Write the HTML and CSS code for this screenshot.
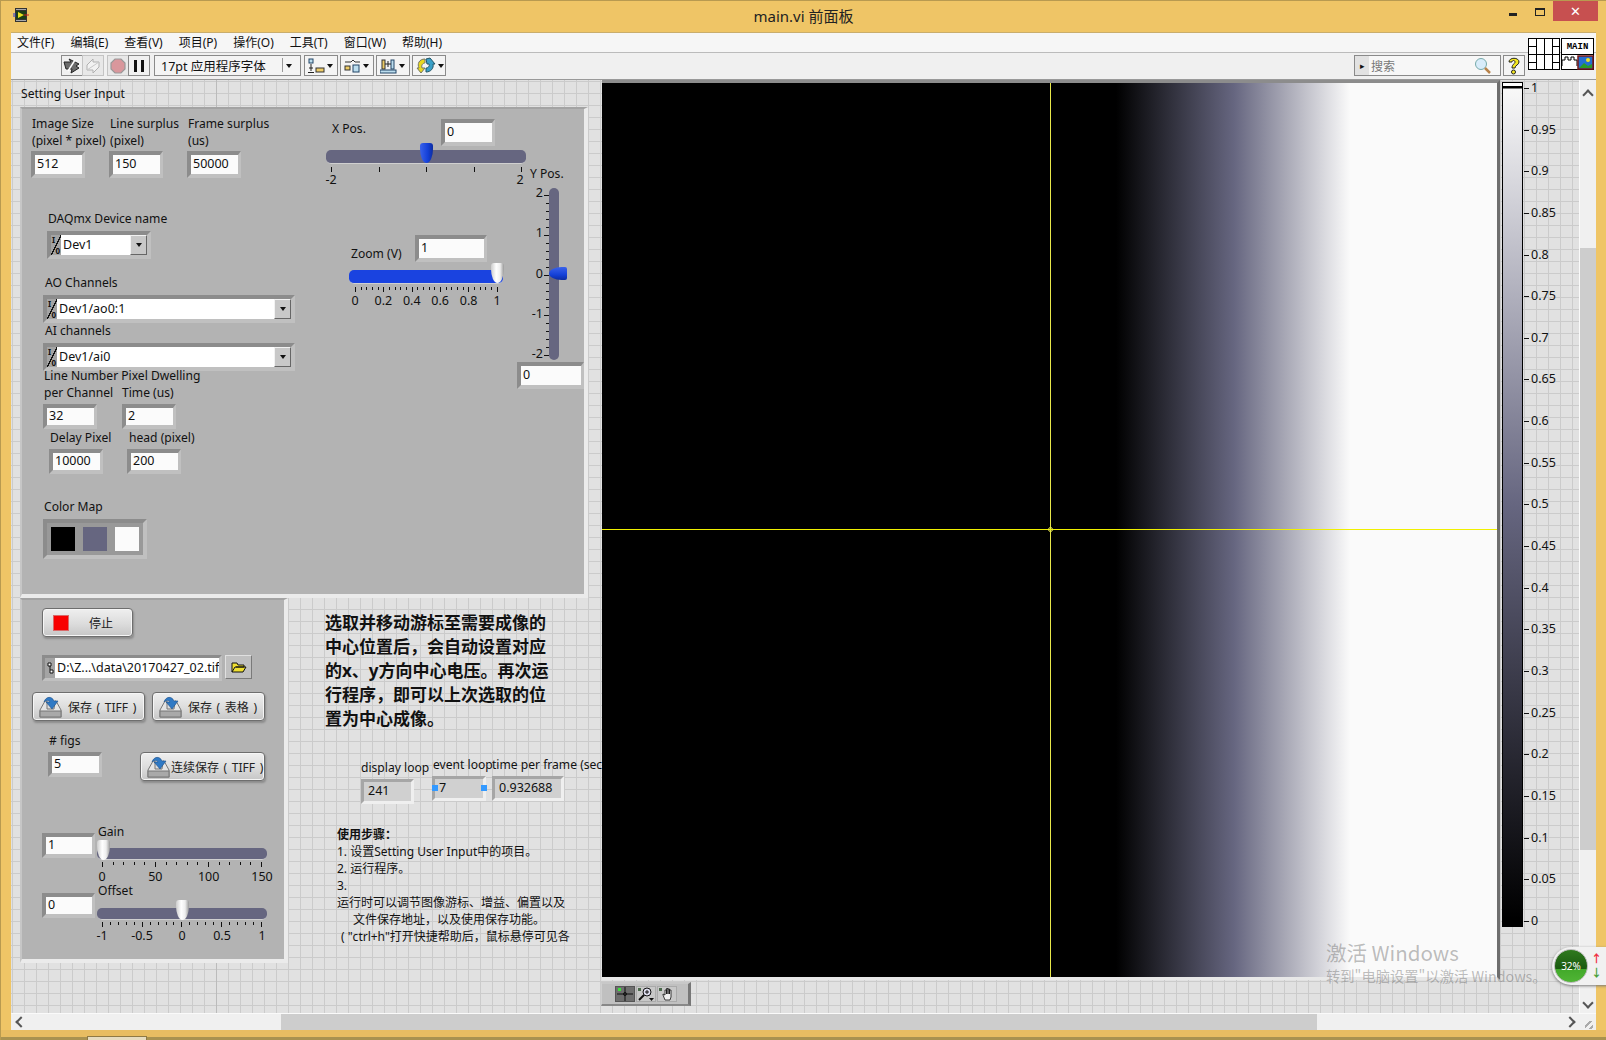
FILE: index.html
```html
<!DOCTYPE html>
<html lang="zh">
<head>
  <meta charset="UTF-8">
  <title>main.vi 前面板</title>
  <link rel="stylesheet" href="styles.css">
</head>
<body>

<svg class="defs" width="0" height="0">
  <symbol id="save-icon" viewBox="0 0 24 24">
    <path d="M2 15 L7 6 H9 V14 H16 L17 6 H18 L23 15 V22 H2 Z" fill="#e4e4e4" stroke="#777" stroke-width="1"/>
    <rect x="2" y="16" width="21" height="6" fill="#a9a9a9" stroke="#777" stroke-width="1"/>
    <path d="M6 7 C8 1 14 1 16 6 H20 L14 14 L8 7 H12 C11 5 8 5 6 7 Z" fill="#2f79c4" stroke="#1c4f88" stroke-width=".6"/>
  </symbol>
</svg>

<div class="window">

  <div class="titlebar">
    <svg class="app-icon" width="16" height="16" viewBox="0 0 16 16">
      <rect x="2" y="1" width="12" height="14" fill="#333"/>
      <rect x="3" y="2" width="10" height="1" fill="#aaa"/>
      <rect x="3" y="13" width="10" height="1" fill="#aaa"/>
      <rect x="3" y="4" width="10" height="8" fill="#1d3d16"/>
      <path d="M5 5 L11 8 L5 11 Z" fill="#e8e020"/>
      <path d="M0 7 H3 M0 9 H3" stroke="#2233cc"/>
      <path d="M11 8 H16" stroke="#d02020"/>
    </svg>
    <div class="title">main.vi 前面板</div>
    <div class="win-buttons">
      <span class="win-min"></span>
      <span class="win-max"></span>
      <span class="win-close">✕</span>
    </div>
  </div>

  <div class="client">
    <div class="menubar">
      <span>文件(F)</span><span>编辑(E)</span><span>查看(V)</span><span>项目(P)</span><span>操作(O)</span><span>工具(T)</span><span>窗口(W)</span><span>帮助(H)</span>
    </div>

    <div class="toolbar">
      <div class="tool-group">
        <button class="tool">
          <svg width="18" height="16" viewBox="0 0 18 16"><path d="M1 4 H8 L6 1 L16 6 L13 8 L16 10 L8 15 L9 11 H3 Z" fill="#6a6a6a" stroke="#222"/><path d="M5 13 L12 2" stroke="#fff" stroke-width="1.4"/></svg>
        </button>
        <button class="tool tool-off">
          <svg width="18" height="16" viewBox="0 0 18 16"><path d="M3 7 L9 1 V4 H15 V9 M15 9 L9 15 V12 H3 V7" fill="#f2f2f2" stroke="#b0b0b0" stroke-width="1"/><path d="M3 12 L15 4" stroke="#c8c8c8"/></svg>
        </button>
      </div>
      <div class="tool-group">
        <button class="tool tool-off">
          <svg width="16" height="16" viewBox="0 0 16 16"><path d="M5 1 H11 L15 5 V11 L11 15 H5 L1 11 V5 Z" fill="#d9979c" stroke="#999" stroke-width="1.2"/></svg>
        </button>
        <button class="tool">
          <svg width="12" height="14" viewBox="0 0 12 14"><path d="M1 1 H4 V13 H1 Z M8 1 H11 V13 H8 Z" fill="#111"/></svg>
        </button>
      </div>
      <div class="font-ring"><span>17pt 应用程序字体</span><i class="arrow-down"></i></div>
      <div class="align-btn">
        <svg width="17" height="16" viewBox="0 0 17 16"><rect x="1" y="1" width="4" height="4" fill="#bde" stroke="#246"/><path d="M3 6 V13 M1 10 H5" stroke="#222"/><rect x="8" y="10" width="8" height="4" fill="#ec6" stroke="#333"/><path d="M0 14.500 H6" stroke="#222"/></svg>
        <i class="arrow-down"></i>
      </div>
      <div class="align-btn">
        <svg width="17" height="16" viewBox="0 0 17 16"><path d="M1 4 H7 L9 2 L11 4 H16" fill="none" stroke="#333"/><rect x="1" y="8" width="5" height="4" fill="#ec6" stroke="#333"/><rect x="9" y="7" width="6" height="7" fill="#bde" stroke="#246"/></svg>
        <i class="arrow-down"></i>
      </div>
      <div class="align-btn">
        <svg width="17" height="16" viewBox="0 0 17 16"><rect x="2" y="2" width="3" height="9" fill="#ec6" stroke="#333"/><rect x="11" y="2" width="3" height="9" fill="#bde" stroke="#246"/><path d="M5 6 H11 M8 3 V9" stroke="#222"/><rect x="0" y="12" width="16" height="3" fill="#bde" stroke="#246"/></svg>
        <i class="arrow-down"></i>
      </div>
      <div class="align-btn">
        <svg width="20" height="18" viewBox="0 0 20 18"><path d="M9 2 C3 2 1 7 3 11 L1 11 L5 16 L9 11 L6 11 C5 8 7 6 9 6 Z" fill="#e8d820" stroke="#776"/><path d="M10 2 L14 1 L19 7 H17 C18 11 15 15 10 15 V11 C12 11 14 9 13 7 H11 Z" fill="#3aa0c8" stroke="#256"/></svg>
        <i class="arrow-down"></i>
      </div>
      <div class="toolbar-right">
        <div class="search">
          <span class="search-tab">▸</span>
          <span class="search-text">搜索</span>
          <svg width="18" height="18" viewBox="0 0 18 18"><circle cx="7" cy="7" r="5.500" fill="#d8ecfa" stroke="#7aa"/><path d="M11 11 L16 16" stroke="#b8824a" stroke-width="2.500"/></svg>
        </div>
        <div class="help-btn">
          <svg width="14" height="19" viewBox="0 0 14 19"><path d="M2 6 C2 1 12 1 12 6 C12 9 8 9 8 12 H5 C5 8 8 8 8 6 C8 4 5 4 5 6 Z" fill="#f4e820" stroke="#222"/><circle cx="6.500" cy="16" r="2" fill="#f4e820" stroke="#222"/></svg>
        </div>
        <svg class="vi-icon" width="66" height="33" viewBox="0 0 66 33">
          <rect x=".5" y=".5" width="31" height="31" fill="#fff" stroke="#000"/>
          <path d="M8.500 0 V32 M16.500 0 V32 M24.500 0 V32 M0 8.500 H8 M24 8.500 H32 M0 16.500 H32 M0 24.500 H8 M24 24.500 H32" stroke="#000"/>
          <rect x="33.500" y=".5" width="32" height="31" fill="#fff" stroke="#000"/>
          <path d="M33 16.500 H66" stroke="#000"/>
          <text x="49.500" y="11" text-anchor="middle" class="vi-main">MAIN</text>
          <path d="M34 28 V22 H37 V19 H40 V22 H43 V19 H46 V22 H49 V28" fill="none" stroke="#000"/>
          <rect x="50" y="18" width="15" height="13" fill="#2470d0" stroke="#7a1a1a" stroke-width="1.500"/>
          <circle cx="60" cy="22" r="2" fill="#f4e020"/>
          <path d="M51 30 L56 25 L60 28 L64 26 V30 Z" fill="#2a9a2a"/>
        </svg>
      </div>
    </div>

    <div class="main-row">
      <div class="canvas">

        <div class="cluster cluster-setting"></div>
        <div class="cluster cluster-run"></div>

        <div class="lbl l-setting">Setting User Input</div>

        <div class="lbl l-size">Image Size<br>(pixel * pixel)</div>
        <div class="lbl l-surplus">Line surplus<br>(pixel)</div>
        <div class="lbl l-frame">Frame surplus<br>(us)</div>
        <div class="num n-size"><span>512</span></div>
        <div class="num n-surplus"><span>150</span></div>
        <div class="num n-frame"><span>50000</span></div>

        <div class="lbl l-daq">DAQmx Device name</div>
        <div class="ring r-dev"><span class="io"><em>I</em><em>0</em></span><span class="ring-text">Dev1</span><b class="ring-btn"><i class="arrow-down"></i></b></div>
        <div class="lbl l-ao">AO Channels</div>
        <div class="ring r-ao"><span class="io"><em>I</em><em>0</em></span><span class="ring-text">Dev1/ao0:1</span><b class="ring-btn"><i class="arrow-down"></i></b></div>
        <div class="lbl l-ai">AI channels</div>
        <div class="ring r-ai"><span class="io"><em>I</em><em>0</em></span><span class="ring-text">Dev1/ai0</span><b class="ring-btn"><i class="arrow-down"></i></b></div>

        <div class="lbl l-linenum">Line Number Pixel Dwelling<br>per Channel</div>
        <div class="lbl l-time">Time (us)</div>
        <div class="num num-low n-line"><span>32</span></div>
        <div class="num num-low n-dwell"><span>2</span></div>
        <div class="lbl l-delay">Delay Pixel</div>
        <div class="lbl l-head">head (pixel)</div>
        <div class="num num-low n-delay"><span>10000</span></div>
        <div class="num num-low n-head"><span>200</span></div>

        <div class="lbl l-cmap">Color Map</div>
        <div class="cmap">
          <span class="swatch swatch-black"></span>
          <span class="swatch swatch-slate"></span>
          <span class="swatch swatch-white"></span>
        </div>

        <div class="lbl l-xpos">X Pos.</div>
        <div class="num n-xpos"><span>0</span></div>
        <div class="slider s-xpos"><i class="thumb thumb-blue"></i></div>
        <div class="ticks t-xpos"><i></i><i></i><i></i><i></i><i></i></div>
        <div class="scale sc-xpos"><span>-2</span><span>2</span></div>

        <div class="lbl l-ypos">Y Pos.</div>
        <div class="slider-v s-ypos"><i class="thumb-v"></i></div>
        <div class="ticks-v t-ypos"><i></i><i class="mn"></i><i class="mn"></i><i class="mn"></i><i class="mn"></i><i></i><i class="mn"></i><i class="mn"></i><i class="mn"></i><i class="mn"></i><i></i><i class="mn"></i><i class="mn"></i><i class="mn"></i><i class="mn"></i><i></i><i class="mn"></i><i class="mn"></i><i class="mn"></i><i class="mn"></i><i></i></div>
        <div class="scale-v sc-ypos"><span>2</span><span>1</span><span>0</span><span>-1</span><span>-2</span></div>
        <div class="num n-ypos"><span>0</span></div>

        <div class="lbl l-zoom">Zoom (V)</div>
        <div class="num n-zoom"><span>1</span></div>
        <div class="slider s-zoom"><i class="thumb thumb-white"></i></div>
        <div class="ticks t-zoom"><i></i><i class="mn"></i><i class="mn"></i><i class="mn"></i><i class="mn"></i><i></i><i class="mn"></i><i class="mn"></i><i class="mn"></i><i class="mn"></i><i></i><i class="mn"></i><i class="mn"></i><i class="mn"></i><i class="mn"></i><i></i><i class="mn"></i><i class="mn"></i><i class="mn"></i><i class="mn"></i><i></i><i class="mn"></i><i class="mn"></i><i class="mn"></i><i class="mn"></i><i></i></div>
        <div class="scale sc-zoom"><span>0</span><span>0.2</span><span>0.4</span><span>0.6</span><span>0.8</span><span>1</span></div>

        <button class="lv-btn b-stop"><i class="led"></i><span>停止</span></button>

        <div class="path-box">
          <span class="path-tab"><svg width="7" height="12" viewBox="0 0 7 12"><path d="M1 1 H4 V4 H1 Z M3 4 V8 M3 8 H6 V11 H3 Z" fill="#fff" stroke="#111"/></svg></span>
          <span class="path-text">D:\Z...\data\20170427_02.tif</span>
        </div>
        <button class="browse">
          <svg width="16" height="11" viewBox="0 0 16 11"><path d="M1 10 V1 H6 L7 3 H13 V5 H4 L1 10 H12 L15 5 H5" fill="#f0e030" stroke="#111"/></svg>
        </button>

        <button class="lv-btn b-tiff"><svg class="save-svg" width="24" height="24"><use href="#save-icon"/></svg><span>保存 ( TIFF )</span></button>
        <button class="lv-btn b-table"><svg class="save-svg" width="24" height="24"><use href="#save-icon"/></svg><span>保存 ( 表格 )</span></button>

        <div class="lbl l-figs"># figs</div>
        <div class="num num-low n-figs"><span>5</span></div>
        <button class="lv-btn b-cont"><svg class="save-svg" width="24" height="24"><use href="#save-icon"/></svg><span>连续保存 ( TIFF )</span></button>

        <div class="lbl l-gain">Gain</div>
        <div class="num num-low n-gain"><span>1</span></div>
        <div class="slider slider-thin s-gain"><i class="thumb thumb-white"></i></div>
        <div class="ticks t-gain"><i></i><i class="mn"></i><i class="mn"></i><i class="mn"></i><i class="mn"></i><i></i><i class="mn"></i><i class="mn"></i><i class="mn"></i><i class="mn"></i><i></i><i class="mn"></i><i class="mn"></i><i class="mn"></i><i class="mn"></i><i></i></div>
        <div class="scale sc-gain"><span>0</span><span>50</span><span>100</span><span>150</span></div>

        <div class="lbl l-offset">Offset</div>
        <div class="num num-low n-offset"><span>0</span></div>
        <div class="slider slider-thin s-offset"><i class="thumb thumb-white"></i></div>
        <div class="ticks t-offset"><i></i><i class="mn"></i><i class="mn"></i><i class="mn"></i><i class="mn"></i><i></i><i class="mn"></i><i class="mn"></i><i class="mn"></i><i class="mn"></i><i></i><i class="mn"></i><i class="mn"></i><i class="mn"></i><i class="mn"></i><i></i><i class="mn"></i><i class="mn"></i><i class="mn"></i><i class="mn"></i><i></i></div>
        <div class="scale sc-offset"><span>-1</span><span>-0.5</span><span>0</span><span>0.5</span><span>1</span></div>

        <div class="note-bold">选取并移动游标至需要成像的<br>中心位置后，会自动设置对应<br>的x、y方向中心电压。再次运<br>行程序，即可以上次选取的位<br>置为中心成像。</div>

        <div class="lbl l-display">display loop</div>
        <div class="lbl l-event">event loop</div>
        <div class="lbl l-perframe">time per frame (sec)</div>
        <div class="ind i-display"><span>241</span></div>
        <div class="ind i-event"><span>7</span></div>
        <div class="ind i-time"><span>0.932688</span></div>
        <i class="handle h-left"></i>
        <i class="handle h-right"></i>

        <div class="steps">
          <b>使用步骤：</b><br>
          1. 设置Setting User Input中的项目。<br>
          2. 运行程序。<br>
          3.<br>
          运行时可以调节图像游标、增益、偏置以及<br>
          <span class="indent1">文件保存地址，以及使用保存功能。</span><br>
          <span class="indent2">( "ctrl+h"打开快捷帮助后，鼠标悬停可见各</span>
        </div>

        <div class="graph">
          <i class="cursor-v"></i>
          <i class="cursor-h"></i>
          <i class="cursor-c"></i>
        </div>

        <div class="graph-palette">
          <span class="pal-btn pal-on">
            <svg width="16" height="14" viewBox="0 0 16 14"><path d="M8 0 V14 M0 7 H16" stroke="#111"/><circle cx="8" cy="7" r="1.500" fill="none" stroke="#111"/><rect x="1" y="1" width="3" height="3" fill="#3de03d"/></svg>
          </span>
          <span class="pal-btn">
            <svg width="16" height="14" viewBox="0 0 16 14"><rect x="0" y="1" width="3" height="3" fill="#4c6a4c"/><circle cx="9" cy="5" r="4" fill="#dde" stroke="#111"/><path d="M7 5 H11 M9 3 V7" stroke="#111"/><path d="M6 8 L1 13" stroke="#111" stroke-width="2"/><path d="M11 11 H16 L13.500 14 Z" fill="#111"/></svg>
          </span>
          <span class="pal-btn">
            <svg width="16" height="14" viewBox="0 0 16 14"><rect x="0" y="1" width="3" height="3" fill="#4c6a4c"/><path d="M6 13 L4 8 V7 L6 8 V3 H7.500 V7 V1.500 H9 V7 V2 H10.500 V7 V3 H12 V10 L11 13 Z" fill="#eee" stroke="#111" stroke-width=".8"/></svg>
          </span>
        </div>

        <div class="colorbar"></div>
        <div class="colorbar-scale">
          <span>1</span><span>0.95</span><span>0.9</span><span>0.85</span><span>0.8</span><span>0.75</span><span>0.7</span><span>0.65</span><span>0.6</span><span>0.55</span><span>0.5</span><span>0.45</span><span>0.4</span><span>0.35</span><span>0.3</span><span>0.25</span><span>0.2</span><span>0.15</span><span>0.1</span><span>0.05</span><span>0</span>
        </div>
      </div>

      <div class="vscroll">
        <i class="chev chev-up"></i>
        <div class="vtrack"><div class="vthumb"></div></div>
        <i class="chev chev-down"></i>
      </div>
    </div>

    <div class="hscroll">
      <i class="chev chev-left"></i>
      <div class="htrack"><div class="hthumb"></div></div>
      <i class="chev chev-right"></i>
      <div class="grip"></div>
    </div>
  </div>

  <div class="bottom-edge"><span class="task-tab"></span></div>

  <div class="watermark">
    <div class="wm-big">激活 Windows</div>
    <div class="wm-small">转到"电脑设置"以激活 Windows。</div>
  </div>

  <div class="gadget">
    <div class="ball">32%</div>
    <div class="speed"><span class="up">↑</span><span class="down">↓</span></div>
  </div>
</div>

</body>
</html>
```

FILE: styles.css
```css
* {
  box-sizing: border-box;
}
body {
  margin: 0;
  font-family: "Noto Sans", "Noto Sans CJK SC", sans-serif;
  font-size: 12.5px;
  color: #111;
  background: #efc566;
}
.defs {
  position: absolute;
}
.window {
  position: relative;
  width: 1606px;
  height: 1040px;
  overflow: hidden;
  display: flex;
  flex-direction: column;
  background: #efc566;
  border-top: 1px solid #b89a50;
  border-left: 1px solid #b89a50;
}

/* title bar */
.titlebar {
  height: 31px;
  flex: none;
  display: flex;
  align-items: flex-start;
  position: relative;
}
.app-icon {
  margin: 6px 0 0 12px;
}
.title {
  position: absolute;
  left: 0;
  right: 0;
  top: 5px;
  text-align: center;
  font-size: 15px;
  line-height: 20px;
  color: #222;
}
.win-buttons {
  margin-left: auto;
  display: flex;
  align-items: flex-start;
}
.win-min {
  width: 8px;
  height: 3px;
  background: #222;
  margin-top: 12px;
  margin-right: 18px;
}
.win-max {
  width: 10px;
  height: 8px;
  border: 1px solid #222;
  border-top-width: 2px;
  margin-top: 7px;
  margin-right: 8px;
}
.win-close {
  width: 45px;
  height: 20px;
  background: #c75050;
  color: #fff;
  text-align: center;
  font-size: 13px;
  line-height: 20px;
  margin-right: 8px;
}

.client {
  margin-left: 10px;
  width: 1585px;
  height: 998px;
  flex: none;
  display: flex;
  flex-direction: column;
  border-top: 1px solid #c9ad6c;
}

/* menu and toolbar */
.menubar {
  height: 20px;
  flex: none;
  background: #f6f6f6;
  display: flex;
  gap: 16px;
  padding-left: 6px;
  font-size: 12px;
  line-height: 19px;
  border-bottom: 1px solid #bbb;
}
.toolbar {
  height: 26px;
  flex: none;
  background: #f0f0f0;
  display: flex;
  align-items: flex-start;
  padding: 2px 0 0 50px;
  position: relative;
}
.tool-group {
  display: flex;
  margin-right: 4px;
}
.tool {
  width: 22px;
  height: 21px;
  padding: 0;
  border: 1px solid #8a8a8a;
  background: #f0f0f0;
  display: flex;
  align-items: center;
  justify-content: center;
  margin-right: -1px;
}
.tool-off {
  background: #e8e8e8;
  border-color: #c4c4c4;
}
.font-ring {
  width: 147px;
  height: 21px;
  border: 1px solid #8a8a8a;
  background: #f4f4f4;
  display: flex;
  align-items: center;
  padding-left: 6px;
  font-size: 12.5px;
  margin-left: 1px;
  margin-right: 3px;
  position: relative;
}
.font-ring .arrow-down {
  position: absolute;
  right: 8px;
  top: 8px;
}
.font-ring::after {
  content: "";
  position: absolute;
  right: 17px;
  top: 2px;
  height: 14px;
  border-left: 1px solid #999;
}
.align-btn {
  width: 34px;
  height: 21px;
  border: 1px solid #8a8a8a;
  background: #f4f4f4;
  display: flex;
  align-items: center;
  padding-left: 3px;
  gap: 2px;
  margin-right: 2px;
}
.arrow-down {
  display: inline-block;
  width: 0;
  height: 0;
  border-left: 3.5px solid transparent;
  border-right: 3.5px solid transparent;
  border-top: 4px solid #111;
}
.toolbar-right {
  position: absolute;
  left: 1343px;
  top: 0;
  display: flex;
  align-items: flex-start;
}
.search {
  width: 147px;
  height: 21px;
  margin-top: 2px;
  border: 1px solid #8a8a8a;
  background: #f7f7f7;
  display: flex;
  align-items: center;
}
.search-tab {
  width: 14px;
  font-size: 9px;
  text-align: center;
  background: #e2e2e2;
  height: 100%;
  line-height: 19px;
}
.search-text {
  flex: 1;
  padding-left: 2px;
  font-size: 12px;
  color: #777;
}
.search svg {
  margin-right: 8px;
}
.help-btn {
  width: 22px;
  height: 21px;
  margin: 2px 0 0 2px;
  border: 1px solid #8a8a8a;
  background: #f4f4f4;
  display: flex;
  align-items: center;
  justify-content: center;
}
.vi-icon {
  position: absolute;
  left: 174px;
  top: -15px;
}
.vi-main {
  font-family: "Liberation Mono", monospace;
  font-size: 9px;
  font-weight: bold;
}

/* main area */
.main-row {
  display: flex;
  flex: 1;
  min-height: 0;
  border-top: 1px solid #999;
}
.canvas {
  position: relative;
  flex: 1;
  overflow: hidden;
  background-color: #e1e1e1;
  background-image:
    linear-gradient(#bbb, #bbb),
    linear-gradient(#cbcbcb 1px, transparent 1px),
    linear-gradient(90deg, #cbcbcb 1px, transparent 1px);
  background-size: 1px 100%, 12px 12px, 12px 12px;
  background-position: 205px 0, 0 1px, 1px 0;
  background-repeat: no-repeat, repeat, repeat;
}
.vscroll {
  width: 17px;
  flex: none;
  background: #f0f0f0;
  display: flex;
  flex-direction: column;
  align-items: center;
  border-left: 1px solid #fafafa;
}
.vtrack {
  flex: 1;
  width: 100%;
  padding-top: 144px;
}
.vthumb {
  height: 602px;
  background: #cdcdcd;
}
.hscroll {
  height: 17px;
  flex: none;
  background: #f0f0f0;
  display: flex;
  align-items: center;
  border-top: 1px solid #fafafa;
  position: relative;
}
.htrack {
  flex: 1;
  height: 100%;
  padding-left: 256px;
}
.hthumb {
  width: 1036px;
  height: 100%;
  background: #cdcdcd;
}
.chev {
  flex: none;
  width: 8px;
  height: 8px;
  border-top: 2px solid #555;
  border-left: 2px solid #555;
}
.chev-up {
  transform: rotate(45deg);
  margin: 11px 0 5px;
}
.chev-down {
  transform: rotate(225deg);
  margin: 0 0 6px;
}
.chev-left {
  transform: rotate(-45deg);
  margin: 0 0 0 6px;
}
.chev-right {
  transform: rotate(135deg);
  margin: 0 22px 0 0;
}
.grip {
  position: absolute;
  right: 3px;
  bottom: 1px;
  width: 8px;
  height: 8px;
  background: repeating-linear-gradient(135deg, transparent 0 3px, #aaa 3px 5px);
}
.bottom-edge {
  flex: 1;
  position: relative;
  background: linear-gradient(#e8bd62 0 7px, #a99250 7px);
}
.task-tab {
  position: absolute;
  left: 86px;
  top: 6px;
  width: 60px;
  height: 6px;
  background: #e6dcc0;
  border: 1px solid #8f7a45;
}

/* front panel pieces */
.cluster {
  position: absolute;
  background: #b3b3b3;
  border-style: solid;
  border-width: 2px 4px 4px 2px;
  border-color: #a3a3a3 #ebebeb #ebebeb #c6c6c6;
}
.cluster-setting {
  left: 9px;
  top: 27px;
  width: 568px;
  height: 491px;
}
.cluster-run {
  left: 9px;
  top: 518px;
  width: 268px;
  height: 365px;
}
.lbl {
  position: absolute;
  font-size: 12.1px;
  line-height: 17px;
  white-space: nowrap;
}
.num, .ind {
  position: absolute;
  width: 54px;
  height: 27px;
  border-style: solid;
  border-width: 4px 3px 4px 4px;
  background: #fbfbfb;
  padding-left: 2px;
  line-height: 18px;
}
.num {
  border-color: #8c8c8c #c0c0c0 #c0c0c0 #8c8c8c;
}
.num-low {
  height: 25px;
  line-height: 16px;
}
.ind {
  height: 25px;
  background: #d0d0d0;
  border-color: #a6a6a6 #efefef #efefef #a6a6a6;
  border-width: 3px;
  padding-left: 4px;
  line-height: 18px;
}
.l-setting { left: 10px; top: 5px; }
.l-size { left: 21px; top: 35px; }
.l-surplus { left: 99px; top: 35px; }
.l-frame { left: 177px; top: 35px; }
.n-size { left: 20px; top: 71px; }
.n-surplus { left: 98px; top: 71px; }
.n-frame { left: 176px; top: 71px; }
.l-daq { left: 37px; top: 130px; }
.l-ao { left: 34px; top: 194px; }
.l-ai { left: 34px; top: 242px; }
.ring {
  position: absolute;
  height: 28px;
  border-style: solid;
  border-width: 4px;
  border-color: #8c8c8c #c0c0c0 #c0c0c0 #8c8c8c;
  background: #a4a4a4;
  display: flex;
  align-items: stretch;
}
.io {
  width: 10px;
  flex: none;
  display: flex;
  flex-direction: column;
  justify-content: space-between;
  font-size: 8px;
  line-height: 9px;
  font-weight: bold;
  background: linear-gradient(to top left, transparent 46%, #111 46% 52%, transparent 52%);
}
.io em {
  font-style: normal;
  padding-left: 1px;
}
.io em:last-child {
  align-self: flex-end;
  padding: 0 1px 0 0;
}
.ring-text {
  flex: 1;
  background: #fff;
  padding-left: 2px;
  line-height: 19px;
}
.ring-btn {
  flex: none;
  width: 17px;
  background: #c8c8c8;
  border: 1px solid #666;
  border-top-color: #f2f2f2;
  border-left-color: #f2f2f2;
  display: flex;
  align-items: center;
  justify-content: center;
}
.r-dev { left: 36px; top: 151px; width: 104px; }
.r-ao { left: 32px; top: 215px; width: 252px; }
.r-ai { left: 32px; top: 263px; width: 252px; }
.l-linenum { left: 33px; top: 287px; }
.l-time { left: 111px; top: 304px; }
.n-line { left: 32px; top: 324px; }
.n-dwell { left: 111px; top: 324px; }
.l-delay { left: 39px; top: 349px; }
.l-head { left: 118px; top: 349px; }
.n-delay { left: 38px; top: 369px; }
.n-head { left: 116px; top: 369px; }
.l-cmap { left: 33px; top: 418px; }
.cmap {
  position: absolute;
  left: 32px;
  top: 439px;
  width: 104px;
  height: 40px;
  border-style: solid;
  border-width: 4px;
  border-color: #8c8c8c #c0c0c0 #c0c0c0 #8c8c8c;
  background: #999;
  display: flex;
  gap: 8px;
  padding: 4px 0 0 4px;
}
.swatch {
  width: 24px;
  height: 24px;
}
.swatch-black { background: #000; }
.swatch-slate { background: #666680; }
.swatch-white { background: #fbfbfb; }

.slider {
  position: absolute;
  height: 14px;
  background: #666680;
  border-radius: 5px;
  border-bottom: 1px solid #d0d0d0;
}
.slider-thin {
  height: 12px;
}
.thumb {
  position: absolute;
  top: -7px;
  width: 13px;
  height: 20px;
  border-radius: 3px 3px 50% 50% / 3px 3px 70% 70%;
}
.thumb-blue {
  background: linear-gradient(90deg, #3a62ea, #1440d8 60%, #0c2ca0);
}
.thumb-white {
  background: linear-gradient(90deg, #ccc, #fff 40%, #eee 70%, #999);
}
.slider-v {
  position: absolute;
  background: #666680;
  border-radius: 5px;
}
.thumb-v {
  position: absolute;
  left: 0;
  top: 79px;
  width: 18px;
  height: 13px;
  background: linear-gradient(#3a62ea, #1440d8 60%, #0c2ca0);
  border-radius: 70% 2px 2px 70% / 50% 2px 2px 50%;
}
.ticks {
  position: absolute;
  display: flex;
  justify-content: space-between;
  align-items: flex-start;
  height: 5px;
}
.ticks i {
  width: 1px;
  height: 5px;
  background: #111;
}
.ticks i.mn {
  height: 3px;
}
.ticks-v {
  position: absolute;
  display: flex;
  flex-direction: column;
  justify-content: space-between;
  align-items: flex-end;
  width: 5px;
}
.ticks-v i {
  width: 5px;
  height: 1px;
  background: #111;
}
.ticks-v i.mn {
  width: 3px;
}
.scale {
  position: absolute;
  display: flex;
  justify-content: space-between;
  line-height: 16px;
}
.scale span {
  width: 0;
  display: flex;
  justify-content: center;
  white-space: nowrap;
}
.scale-v {
  position: absolute;
  display: flex;
  flex-direction: column;
  justify-content: space-between;
  text-align: right;
  line-height: 16px;
}

.l-xpos { left: 321px; top: 40px; }
.n-xpos { left: 430px; top: 39px; }
.s-xpos { left: 315px; top: 70px; width: 200px; }
.s-xpos .thumb { left: 94px; }
.t-xpos { left: 320px; top: 87px; width: 191px; }
.sc-xpos { left: 320px; top: 92px; width: 189px; }
.l-ypos { left: 519px; top: 85px; }
.s-ypos { left: 538px; top: 108px; width: 10px; height: 172px; }
.t-ypos { left: 533px; top: 115px; height: 161px; }
.sc-ypos { left: 510px; top: 105px; width: 22px; height: 177px; }
.n-ypos { left: 506px; top: 282px; width: 67px; }
.l-zoom { left: 340px; top: 165px; }
.n-zoom { left: 404px; top: 155px; width: 72px; }
.s-zoom { left: 338px; top: 190px; width: 154px; background: #1a43e0; }
.s-zoom .thumb { left: 142px; }
.t-zoom { left: 344px; top: 207px; width: 143px; }
.sc-zoom { left: 344px; top: 213px; width: 142px; }

.lv-btn {
  position: absolute;
  height: 29px;
  border: 1px solid #6e6e6e;
  border-radius: 4px;
  background: linear-gradient(#efefef, #dcdcdc 55%, #c6c6c6);
  box-shadow: inset 0 0 0 1px #f6f6f6, 1px 2px 2px #8c8c8c;
  display: flex;
  align-items: center;
  padding: 0;
  font-family: inherit;
  font-size: 12px;
  word-spacing: 1.5px;
  color: #222;
  white-space: nowrap;
}
.b-stop { left: 31px; top: 528px; width: 91px; }
.b-stop span { margin-left: 20px; }
.led {
  width: 16px;
  height: 16px;
  margin-left: 10px;
  background: #f80000;
  border: 1px solid #d86a6a;
}
.save-svg {
  margin-left: 5px;
  flex: none;
}
.b-tiff { left: 21px; top: 612px; width: 113px; }
.b-table { left: 141px; top: 612px; width: 113px; }
.b-cont { left: 129px; top: 672px; width: 125px; }
.b-tiff span, .b-table span { margin-left: 6px; }
.b-cont span { margin-left: 1px; }
.path-box {
  position: absolute;
  left: 31px;
  top: 575px;
  width: 180px;
  height: 26px;
  border-style: solid;
  border-width: 3px;
  border-color: #8c8c8c #c0c0c0 #c0c0c0 #8c8c8c;
  background: #a4a4a4;
  display: flex;
}
.path-tab {
  width: 10px;
  flex: none;
  display: flex;
  align-items: center;
  justify-content: center;
}
.path-text {
  flex: 1;
  background: #fff;
  padding-left: 2px;
  line-height: 19px;
  white-space: nowrap;
  overflow: hidden;
}
.browse {
  position: absolute;
  left: 214px;
  top: 575px;
  width: 27px;
  height: 24px;
  padding: 0;
  border: 1px solid #7a7a7a;
  border-top-color: #e0e0e0;
  border-left-color: #e0e0e0;
  background: #c0c0c0;
  display: flex;
  align-items: center;
  justify-content: center;
}
.l-figs { left: 38px; top: 652px; }
.n-figs { left: 37px; top: 672px; }
.l-gain { left: 87px; top: 743px; }
.n-gain { left: 31px; top: 753px; width: 53px; }
.s-gain { left: 86px; top: 768px; width: 170px; }
.s-gain .thumb { left: 0; top: -8px; }
.t-gain { left: 91px; top: 782px; width: 160px; }
.sc-gain { left: 91px; top: 789px; width: 160px; }
.l-offset { left: 87px; top: 802px; }
.n-offset { left: 31px; top: 813px; width: 53px; }
.s-offset { left: 86px; top: 828px; width: 170px; }
.s-offset .thumb { left: 79px; top: -8px; }
.t-offset { left: 91px; top: 842px; width: 160px; }
.sc-offset { left: 91px; top: 848px; width: 160px; }

.note-bold {
  position: absolute;
  left: 314px;
  top: 531px;
  font-size: 17px;
  font-weight: bold;
  line-height: 24px;
  white-space: nowrap;
}
.l-display { left: 350px; top: 679px; }
.l-event { left: 422px; top: 676px; }
.l-perframe { left: 481px; top: 676px; }
.i-display { left: 350px; top: 699px; width: 53px; }
.i-event { left: 421px; top: 696px; }
.i-time { left: 481px; top: 696px; width: 72px; }
.handle {
  position: absolute;
  width: 6px;
  height: 6px;
  background: #3399ff;
}
.h-left { left: 421px; top: 705px; }
.h-right { left: 470px; top: 705px; }
.steps {
  position: absolute;
  left: 326px;
  top: 746px;
  font-size: 12px;
  line-height: 17px;
  white-space: nowrap;
}
.indent1 { margin-left: 16px; }
.indent2 { margin-left: 4px; }

/* graph */
.graph {
  position: absolute;
  left: 591px;
  top: 0;
  width: 898px;
  height: 900px;
  border-top: 3px solid #8c8c8c;
  border-right: 3px solid #6e6e6e;
  border-bottom: 3px solid #e8e8e8;
  background: linear-gradient(90deg, #000 0 514px, #31313d 570px, #666680 632px, #b0b0bc 690px, #fafafa 748px);
}
.cursor-v {
  position: absolute;
  left: 448px;
  top: 0;
  bottom: 0;
  width: 1px;
  background: #e8e84a;
}
.cursor-h {
  position: absolute;
  left: 0;
  right: 0;
  top: 446px;
  height: 1px;
  background: #f0f000;
}
.cursor-c {
  position: absolute;
  left: 446px;
  top: 444px;
  width: 5px;
  height: 5px;
  border: 1px solid #e8e84a;
  border-radius: 50%;
}
.graph-palette {
  position: absolute;
  left: 590px;
  top: 902px;
  width: 90px;
  height: 24px;
  background: #c0c0c0;
  border-style: solid;
  border-width: 2px 3px 2px 1px;
  border-color: #c8c8c8 #777 #888 #d0d0d0;
  display: flex;
  gap: 1px;
  padding: 2px 0 0 13px;
}
.pal-btn {
  width: 20px;
  height: 16px;
  background: #c8c8c8;
  border: 1px solid #aaa;
  display: flex;
  align-items: center;
  justify-content: center;
}
.pal-on {
  background: #6e6e6e;
  border-color: #555;
}
.colorbar {
  position: absolute;
  left: 1491px;
  top: 2px;
  width: 21px;
  height: 845px;
  border-left: 1px solid #000;
  border-right: 1px solid #000;
  border-top: 1px solid #000;
  background: linear-gradient(#fff 0 3px, #000 3px 5px, #f8f8f8 6px, #666680 50%, #000 99%);
}
.colorbar-scale {
  position: absolute;
  left: 1513px;
  top: 0;
  height: 849px;
  display: flex;
  flex-direction: column;
  justify-content: space-between;
  line-height: 16px;
}
.colorbar-scale span {
  display: block;
  padding-left: 7px;
  background: linear-gradient(#111, #111) no-repeat 0 8px / 5px 1px;
}

/* overlays */
.watermark {
  position: absolute;
  left: 1325px;
  top: 937px;
  color: rgba(110, 110, 110, 0.45);
  white-space: nowrap;
  font-family: "Noto Sans CJK SC", "Noto Sans", sans-serif;
}
.wm-big {
  font-size: 20.5px;
  line-height: 28px;
}
.wm-small {
  font-size: 14.3px;
  line-height: 20px;
}
.gadget {
  position: absolute;
  left: 1551px;
  top: 946px;
  width: 56px;
  height: 38px;
  background: #f1f1f1;
  border-radius: 19px 0 0 19px;
  box-shadow: 0 1px 3px #777;
  display: flex;
  align-items: center;
  padding-left: 2px;
}
.ball {
  width: 34px;
  height: 34px;
  flex: none;
  border-radius: 50%;
  border: 1px solid #bbb;
  background: linear-gradient(#2f7a1e, #1a5a10 58%, #42a92a 60%, #50b535);
  color: #fff;
  font-size: 10px;
  line-height: 32px;
  text-align: center;
}
.speed {
  display: flex;
  flex-direction: column;
  margin-left: 3px;
  font-size: 11px;
  line-height: 14px;
  font-weight: bold;
}
.up { color: #f03040; }
.down { color: #4aa03a; }
```
